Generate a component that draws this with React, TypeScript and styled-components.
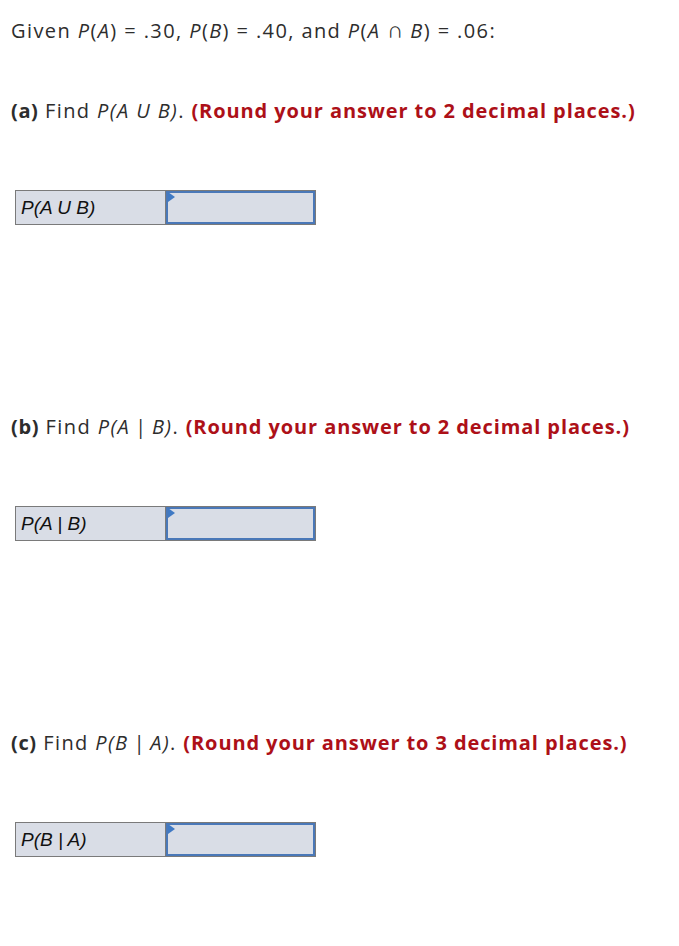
import React from 'react';
import styled, { createGlobalStyle } from 'styled-components';

const Global = createGlobalStyle`
  body {
    margin: 0;
    background: #fff;
    font-family: "Open Sans", "Liberation Sans", sans-serif;
    color: #2d2d2d;
  }
`;

const Page = styled.div`
  padding: 16px 0 0 11px;
`;

const Text = styled.p`
  margin: 0;
  font-size: 20px;
  line-height: 30px;
  letter-spacing: 1.4px;
  white-space: nowrap;
`;

const Cap = styled.span`
  font-family: "Liberation Serif", "DejaVu Serif", serif;
  font-size: 23px;
  line-height: 0;
  letter-spacing: 0;
`;

const Section = styled.section`
  margin-top: 50px;
  & + & {
    margin-top: 187px;
  }
`;

const Part = styled.b`
  font-weight: 700;
  letter-spacing: 0.6px;
`;

const Hint = styled.b`
  color: #ad1018;
  font-weight: 700;
  letter-spacing: 0.9px;
`;

const Answer = styled.div`
  display: flex;
  width: 301px;
  height: 35px;
  margin: 64px 0 0 4px;
  border: 1px solid #7a7a7a;
  box-sizing: border-box;
  background: #d9dde6;
`;

const Label = styled.div`
  width: 150px;
  border-right: 1px solid #7a7a7a;
  display: flex;
  align-items: center;
  padding-left: 5px;
  box-sizing: border-box;
  font-family: "Liberation Sans", Arial, sans-serif;
  font-style: italic;
  font-size: 19px;
  color: #111;
`;

const Field = styled.div`
  position: relative;
  flex: 1;
  border: 2px solid #4a78b8;
  background: #d9dde6;
`;

const Flag = styled.span`
  position: absolute;
  top: 0;
  left: 0;
  border-top: 5px solid transparent;
  border-bottom: 5px solid transparent;
  border-left: 7px solid #3f79c4;
  margin-top: -1px;
`;

const parts = [
  { id: '(a)', expr: 'P(A U B)', dp: 2, label: 'P(A U B)' },
  { id: '(b)', expr: 'P(A\u2009|\u2009B)', dp: 2, label: 'P(A | B)' },
  { id: '(c)', expr: 'P(B\u2009|\u2009A)', dp: 3, label: 'P(B | A)' },
];

export default function App() {
  return (
    <Page>
      <Global />
      <Text>
        Given <i>P</i>(<i>A</i>) = .30, <i>P</i>(<i>B</i>) = .40, and <i>P</i>(<i>A</i> <Cap>∩</Cap> <i>B</i>) = .06:
      </Text>
      {parts.map((p) => (
        <Section key={p.id}>
          <Text>
            <Part>{p.id}</Part> Find <i>{p.expr}</i>. <Hint>(Round your answer to {p.dp} decimal places.)</Hint>
          </Text>
          <Answer>
            <Label>{p.label}</Label>
            <Field>
              <Flag />
            </Field>
          </Answer>
        </Section>
      ))}
    </Page>
  );
}
